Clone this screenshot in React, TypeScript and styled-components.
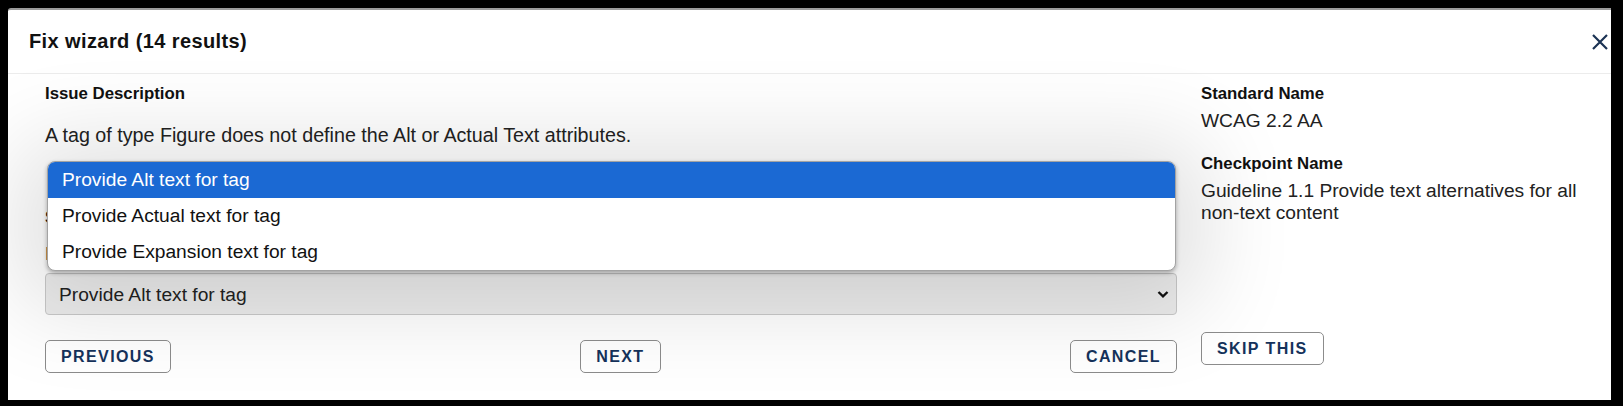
import React from "react";
import styled, { createGlobalStyle } from "styled-components";

const GlobalStyle = createGlobalStyle`
  html, body {
    margin: 0;
    background: #000;
  }
  body {
    font-family: "Liberation Sans", Arial, sans-serif;
  }
`;

const Page = styled.div`
  width: 1623px;
  height: 406px;
  box-sizing: border-box;
  padding: 8px 12px 6px 8px;
`;

const Modal = styled.div`
  height: 392px;
  box-sizing: border-box;
  background: #fff;
  border-top: 2px solid #9b9b9b;
  border-top-left-radius: 3px;
  display: flex;
  flex-direction: column;
  overflow: hidden;
`;

const Header = styled.div`
  height: 63px;
  flex: none;
  display: flex;
  align-items: center;
  justify-content: space-between;
  padding: 0 3px 0 21px;
  border-bottom: 1px solid #ececec;
`;

const Title = styled.h2`
  margin: 0;
  font-size: 20px;
  font-weight: 700;
  letter-spacing: 0.4px;
  color: #111;
`;

const CloseButton = styled.button`
  border: 0;
  background: transparent;
  padding: 0;
  width: 16px;
  height: 16px;
  display: flex;
  color: #1b3354;
  cursor: pointer;
`;

const Body = styled.div`
  flex: 1;
  display: grid;
  grid-template-columns: 1132px 1fr;
  column-gap: 24px;
  padding: 10px 20px 0 37px;
`;

const LeftColumn = styled.div`
  position: relative;
  display: flex;
  flex-direction: column;
`;

const RightColumn = styled.div`
  display: flex;
  flex-direction: column;
  align-items: flex-start;
`;

const Label = styled.div<{ $gap?: number }>`
  font-size: 16.8px;
  line-height: 20px;
  font-weight: 700;
  color: #111;
  margin-top: ${(p) => p.$gap ?? 0}px;
`;

const Text = styled.p<{ $gap?: number; $size?: number }>`
  margin: ${(p) => p.$gap ?? 0}px 0 0;
  font-size: ${(p) => p.$size ?? 19.2}px;
  line-height: 22px;
  color: #222;
`;

const SelectWrap = styled.div`
  position: relative;
  margin-top: 8px;
`;

const Select = styled.select`
  appearance: none;
  width: 100%;
  height: 42px;
  box-sizing: border-box;
  border: 1px solid #c9c9c9;
  border-radius: 4px;
  background: #ececec;
  padding: 0 40px 0 13px;
  font-family: "Liberation Sans", Arial, sans-serif;
  font-size: 19.2px;
  color: #222;
`;

const Chevron = styled.svg`
  position: absolute;
  right: 7px;
  top: 17px;
  pointer-events: none;
`;

const Popup = styled.ul`
  position: absolute;
  top: 77px;
  left: 2px;
  right: 1px;
  margin: 0;
  padding: 0;
  list-style: none;
  background: #fff;
  border: 1px solid #a3a3a3;
  border-radius: 8px;
  overflow: hidden;
  box-shadow: 0 2px 4px rgba(0, 0, 0, 0.3), 0 10px 90px 30px rgba(0, 0, 0, 0.12);
  z-index: 2;
`;

const Option = styled.li<{ $active?: boolean }>`
  height: 36px;
  line-height: 36px;
  padding-left: 14px;
  font-size: 19.2px;
  color: ${(p) => (p.$active ? "#fff" : "#111")};
  background: ${(p) => (p.$active ? "#1b69d3" : "transparent")};
`;

const ButtonRow = styled.div`
  display: flex;
  justify-content: space-between;
  margin-top: 25px;
`;

const Button = styled.button<{ $gap?: number }>`
  height: 33px;
  padding: 0 15px;
  margin-top: ${(p) => p.$gap ?? 0}px;
  border: 1px solid #8c8c8c;
  border-radius: 5px;
  background: transparent;
  color: #15325b;
  font-family: "Liberation Sans", Arial, sans-serif;
  font-size: 16px;
  font-weight: 700;
  letter-spacing: 1.4px;
  cursor: pointer;
`;

const fixes = [
  "Provide Alt text for tag",
  "Provide Actual text for tag",
  "Provide Expansion text for tag",
];

export default function App() {
  return (
    <>
      <GlobalStyle />
      <Page>
        <Modal>
          <Header>
            <Title>Fix wizard (14 results)</Title>
            <CloseButton aria-label="Close">
              <svg width="16" height="16" viewBox="0 0 16 16">
                <path d="M1 1 L15 15 M15 1 L1 15" stroke="currentColor" strokeWidth="2.2" />
              </svg>
            </CloseButton>
          </Header>
          <Body>
            <LeftColumn>
              <Label>Issue Description</Label>
              <Text $gap={20} $size={19.7}>
                A tag of type Figure does not define the Alt or Actual Text attributes.
              </Text>
              <Label $gap={62}>Suggested Fix</Label>
              <Text $gap={15}>Please select a fix from the list below.</Text>
              <SelectWrap>
                <Select defaultValue={fixes[0]}>
                  {fixes.map((f) => (
                    <option key={f}>{f}</option>
                  ))}
                </Select>
                <Chevron width="14" height="9" viewBox="0 0 14 9">
                  <path d="M2.5 2 L7 6.3 L11.5 2" fill="none" stroke="#111" strokeWidth="2.4" />
                </Chevron>
              </SelectWrap>
              <Popup>
                {fixes.map((f, i) => (
                  <Option key={f} $active={i === 0}>
                    {f}
                  </Option>
                ))}
              </Popup>
              <ButtonRow>
                <Button>PREVIOUS</Button>
                <Button>NEXT</Button>
                <Button>CANCEL</Button>
              </ButtonRow>
            </LeftColumn>
            <RightColumn>
              <Label>Standard Name</Label>
              <Text $gap={6}>WCAG 2.2 AA</Text>
              <Label $gap={22}>Checkpoint Name</Label>
              <Text $gap={6}>Guideline 1.1 Provide text alternatives for all non-text content</Text>
              <Button $gap={108}>SKIP THIS</Button>
            </RightColumn>
          </Body>
        </Modal>
      </Page>
    </>
  );
}
